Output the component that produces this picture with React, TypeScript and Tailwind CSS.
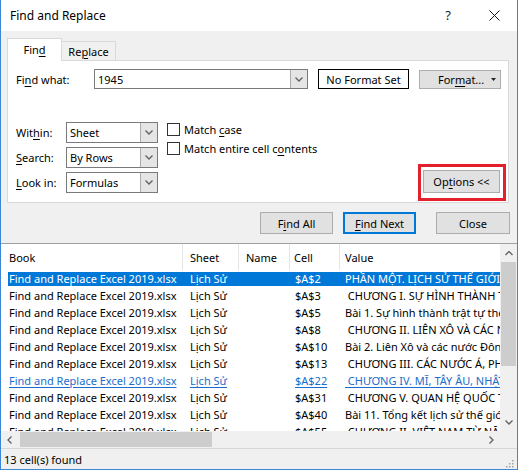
import React from "react";

const Chev = ({ dir = "down", color = "#606060" }: { dir?: "down" | "up" | "left" | "right"; color?: string }) => {
  const paths: Record<string, string> = {
    down: "M0.5 0.5 L4 4 L7.5 0.5",
    up: "M0.5 4 L4 0.5 L7.5 4",
  };
  if (dir === "left" || dir === "right") {
    return (
      <svg width="5" height="8" viewBox="0 0 5 8">
        <path d={dir === "left" ? "M4.5 0.5 L1 4 L4.5 7.5" : "M0.5 0.5 L4 4 L0.5 7.5"} fill="none" stroke={color} strokeWidth="1.3" />
      </svg>
    );
  }
  return (
    <svg width="8" height="5" viewBox="0 0 8 5">
      <path d={paths[dir]} fill="none" stroke={color} strokeWidth="1.3" />
    </svg>
  );
};

const U = ({ children }: { children: React.ReactNode }) => (
  <span className="underline underline-offset-[2px] decoration-[1px]">{children}</span>
);

const Select = ({ value }: { value: string }) => (
  <div className="flex h-[21px] w-[92px] border border-[#7a7a7a] bg-white">
    <div className="flex flex-1 items-center pl-[3px]">{value}</div>
    <div className="flex w-[17px] items-center justify-center border-l border-[#acacac] bg-[#e5e5e5]">
      <Chev />
    </div>
  </div>
);

const Btn = ({ children, w, primary }: { children: React.ReactNode; w: string; primary?: boolean }) => (
  <div
    className={`flex h-[22px] items-center justify-center bg-[#e1e1e1] ${w} ${
      primary ? "border-2 border-[#0078d7]" : "border border-[#adadad]"
    }`}
  >
    {children}
  </div>
);

const rows = [
  ["$A$2", "PHẦN MỘT. LỊCH SỬ THẾ GIỚI HIỆN ĐẠI"],
  ["$A$3", " CHƯƠNG I. SỰ HÌNH THÀNH TRẬT TỰ THẾ GIỚI"],
  ["$A$5", "Bài 1. Sự hình thành trật tự thế giới mới"],
  ["$A$8", " CHƯƠNG II. LIÊN XÔ VÀ CÁC NƯỚC ĐÔNG ÂU"],
  ["$A$10", "Bài 2. Liên Xô và các nước Đông Âu"],
  ["$A$13", " CHƯƠNG III. CÁC NƯỚC Á, PHI VÀ MĨ LATINH"],
  ["$A$22", " CHƯƠNG IV. MĨ, TÂY ÂU, NHẬT BẢN"],
  ["$A$31", " CHƯƠNG V. QUAN HỆ QUỐC TẾ"],
  ["$A$40", "Bài 11. Tổng kết lịch sử thế giới hiện đại"],
  ["$A$55", " CHƯƠNG II. VIỆT NAM TỪ NĂM 1919"],
];

export default function App() {
  return (
    <div className="flex h-[470px] w-[518px] flex-col overflow-hidden border-x border-b border-[#3a87d6] bg-[#f0f0f0] font-['Noto_Sans',sans-serif] text-[11px] leading-none text-black">
      {/* Title bar */}
      <div className="flex h-[31px] shrink-0 items-center bg-white">
        <div className="pl-[9px] text-[12px]">Find and Replace</div>
        <div className="ml-auto mr-[38px] text-[13px] text-[#222]">?</div>
        <svg width="11" height="11" viewBox="0 0 11 11" className="mr-[17px]">
          <path d="M0.5 0.5 L10.5 10.5 M10.5 0.5 L0.5 10.5" stroke="#111" strokeWidth="1" />
        </svg>
      </div>

      {/* Tabs */}
      <div className="relative z-10 -mb-px ml-[6px] mt-[7px] flex h-[23px] items-end">
        <div className="flex h-[23px] w-[55px] items-center justify-center border-x border-t border-[#d9d9d9] bg-white pb-[1px]">
          Fin<U>d</U>
        </div>
        <div className="flex h-[20px] w-[54px] items-center justify-center border-b border-r border-t border-[#d9d9d9] bg-[#f0f0f0]">
          Re<U>p</U>lace
        </div>
      </div>

      {/* Panel */}
      <div className="ml-[6px] flex h-[143px] w-[502px] shrink-0 flex-col border border-[#d9d9d9] bg-white">
        <div className="mt-[8px] flex items-center">
          <div className="w-[86px] pl-[8px]">
            Fi<U>n</U>d what:
          </div>
          <div className="flex h-[20px] w-[214px] border border-[#7a7a7a] bg-white">
            <div className="flex flex-1 items-center pl-[3px]">1945</div>
            <div className="flex w-[17px] items-center justify-center border-l border-[#acacac] bg-[#e5e5e5]">
              <Chev />
            </div>
          </div>
          <div className="ml-[10px] flex h-[20px] w-[91px] items-center justify-center border border-black">No Format Set</div>
          <div className="ml-[10px] flex h-[19px] w-[82px] items-center border border-[#adadad] bg-[#e1e1e1]">
            <span className="ml-[18px]">
              For<U>m</U>at...
            </span>
            <svg width="5" height="3" viewBox="0 0 5 3" className="ml-[7px]">
              <path d="M0 0 L5 0 L2.5 3 Z" fill="#222" />
            </svg>
          </div>
        </div>

        <div className="mt-[33px] flex flex-1">
          <div className="flex flex-col gap-[4px] pl-[8px]">
            <div className="flex items-center">
              <div className="w-[50px]">
                Wit<U>h</U>in:
              </div>
              <Select value="Sheet" />
            </div>
            <div className="flex items-center">
              <div className="w-[50px]">
                <U>S</U>earch:
              </div>
              <Select value="By Rows" />
            </div>
            <div className="flex items-center">
              <div className="w-[50px]">
                <U>L</U>ook in:
              </div>
              <Select value="Formulas" />
            </div>
          </div>
          <div className="ml-[9px] mt-[1px] flex flex-col gap-[6px]">
            <div className="flex h-[13px] items-center">
              <div className="h-[13px] w-[13px] border border-[#333] bg-white" />
              <span className="ml-[4px]">
                Match <U>c</U>ase
              </span>
            </div>
            <div className="flex h-[13px] items-center">
              <div className="h-[13px] w-[13px] border border-[#333] bg-white" />
              <span className="ml-[4px]">
                Match entire cell c<U>o</U>ntents
              </span>
            </div>
          </div>
          <div className="mb-[1px] ml-auto mr-[2px] flex h-[37px] w-[88px] self-end border-[3px] border-[#e3202b] pl-[2px] pt-[3px]">
            <div className="flex h-[23px] w-[77px] items-center justify-center border border-[#adadad] bg-[#e1e1e1]">
              Op<U>t</U>ions &lt;&lt;
            </div>
          </div>
        </div>
      </div>

      {/* Buttons */}
      <div className="mt-[9px] flex justify-end pr-[7px]">
        <Btn w="w-[73px]">
          F<U>i</U>nd All
        </Btn>
        <div className="ml-[10px]">
          <Btn w="w-[73px]" primary>
            <U>F</U>ind Next
          </Btn>
        </div>
        <div className="ml-[20px]">
          <Btn w="w-[74px]">Close</Btn>
        </div>
      </div>

      {/* Results list */}
      <div className="mt-[9px] flex h-[205px] shrink-0 flex-col border-t border-[#a0a0a0] bg-white">
        <div className="flex h-[187px]">
          <div className="flex-1 overflow-hidden whitespace-nowrap">
            <div className="flex h-[26px] items-center">
              <div className="flex h-full w-[182px] items-center border-r border-[#e5e5e5] pl-[8px]">Book</div>
              <div className="flex h-full w-[56px] items-center border-r border-[#e5e5e5] pl-[7px]">Sheet</div>
              <div className="flex h-full w-[51px] items-center border-r border-[#e5e5e5] pl-[7px]">Name</div>
              <div className="flex h-full w-[50px] items-center border-r border-[#e5e5e5] pl-[4px]">Cell</div>
              <div className="flex h-full flex-1 items-center pl-[5px]">Value</div>
            </div>
            {rows.map(([cell, val], i) => {
              const sel = i === 0;
              const hover = i === 6;
              const txt = sel ? "text-white" : hover ? "text-[#1a6dcc]" : "text-black";
              const ul = hover ? "underline underline-offset-[2px] decoration-[1px]" : "";
              return (
                <div key={i} className="flex h-[17px] items-center pl-[7px]">
                  <div className={`flex h-[14px] flex-1 items-center ${sel ? "bg-[#0078d7]" : ""} ${txt}`}>
                    <div className="w-[175px] pl-[1px]">
                      <span className={ul}>Find and Replace Excel 2019.xlsx</span>
                    </div>
                    <div className="w-[56px] pl-[7px]">
                      <span className={ul}>Lịch Sử</span>
                    </div>
                    <div className="w-[51px]" />
                    <div className="w-[50px] pl-[5px]">
                      <span className={ul}>{cell}</span>
                    </div>
                    <div className="h-[16px] flex-1 overflow-hidden whitespace-pre pl-[5px] leading-[15px]">
                      <span className={ul}>{val}</span>
                    </div>
                  </div>
                </div>
              );
            })}
          </div>
          <div className="flex w-[17px] flex-col bg-[#f0f0f0]">
            <div className="flex h-[18px] items-center justify-center">
              <Chev dir="up" />
            </div>
            <div className="mx-[1px] h-[104px] bg-[#cdcdcd]" />
            <div className="flex-1" />
            <div className="flex h-[17px] items-center justify-center">
              <Chev dir="down" />
            </div>
          </div>
        </div>
        <div className="flex h-[17px] bg-[#f0f0f0]">
          <div className="flex w-[17px] items-center justify-center">
            <Chev dir="left" />
          </div>
          <div className="flex-1">
            <div className="ml-[2px] mt-[1px] h-[15px] w-[192px] bg-[#cdcdcd]" />
          </div>
          <div className="flex w-[17px] items-center justify-center">
            <Chev dir="right" />
          </div>
          <div className="w-[17px] bg-[#f0f0f0]" />
        </div>
      </div>

      {/* Status bar */}
      <div className="flex h-[21px] shrink-0 items-center border-t border-[#d7d7d7] bg-[#f0f0f0]">
        <div className="pl-[3px]">13 cell(s) found</div>
        <svg width="10" height="10" viewBox="0 0 10 10" className="ml-auto mr-[3px] mt-[8px]">
          {[
            [8, 2],
            [5, 5],
            [8, 5],
            [2, 8],
            [5, 8],
            [8, 8],
          ].map(([x, y], k) => (
            <rect key={k} x={x} y={y} width="1.5" height="1.5" fill="#a0a0a0" />
          ))}
        </svg>
      </div>
    </div>
  );
}
